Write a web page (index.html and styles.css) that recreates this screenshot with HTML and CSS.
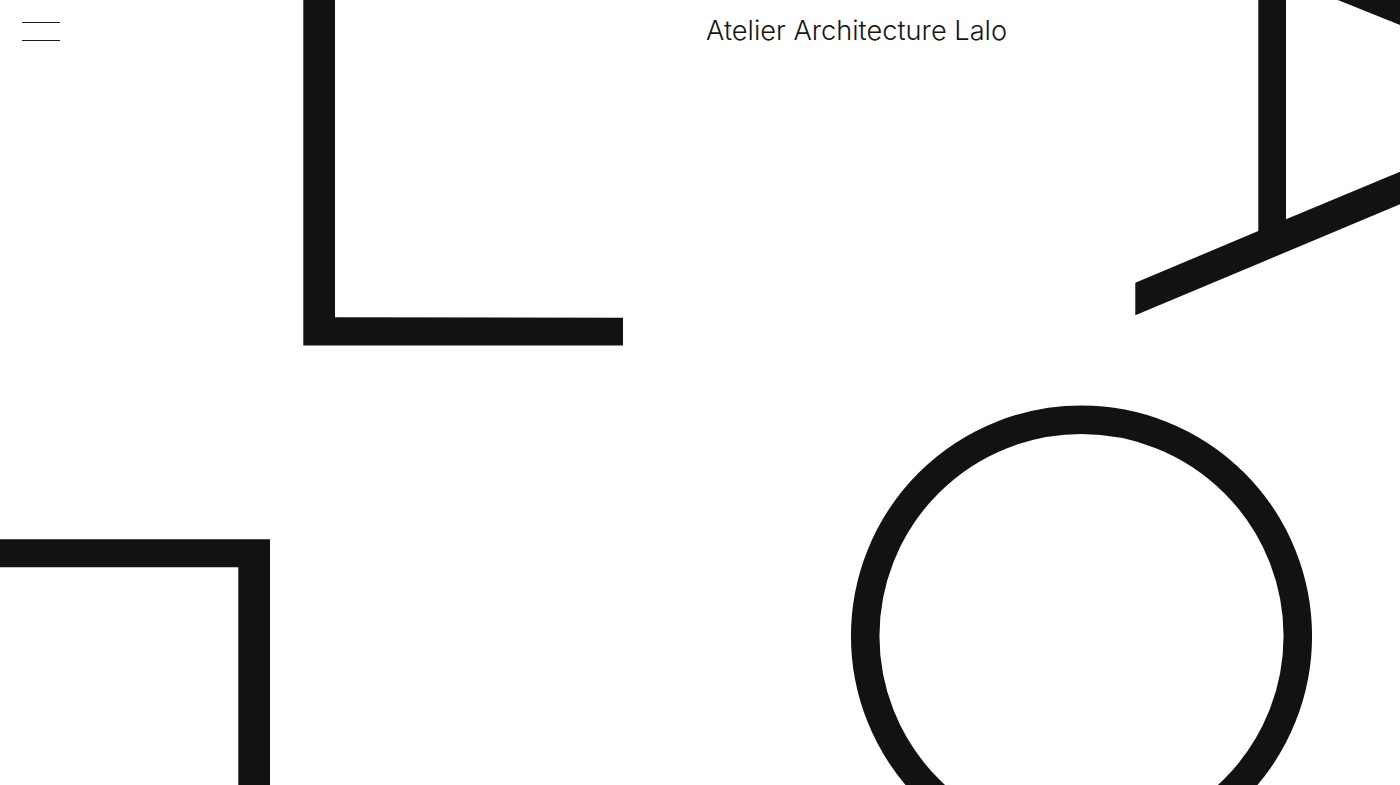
FILE: index.html
```html
<!DOCTYPE html>
<html lang="fr">
<head>
<meta charset="utf-8">
<title>Atelier Architecture Lalo</title>
<link rel="stylesheet" href="styles.css">
</head>
<body>
<div class="page">
  <svg class="letters" width="1400" height="785" viewBox="0 0 1400 785" aria-hidden="true">
    <g fill="#121212">
      <!-- L -->
      <path d="M303.3 -10 H335 V317.2 L623 317.8 V345.5 H303.3 Z"/>
      <!-- A (rotated) -->
      <path d="M1258.3 -10 H1286 V219.3 L1420 163.3 V195.9 L1135.3 315.3 V282.7 L1258.3 231.1 Z"/>
      <path d="M1313 -10 L1420 33.1 V-10 Z"/>
      <!-- L (rotated) -->
      <path d="M-10 539.3 H270 V799 H238.3 V567.3 H-10 Z"/>
    </g>
    <!-- O -->
    <circle cx="1081.5" cy="636" r="216.3" fill="none" stroke="#121212" stroke-width="28.5"/>
  </svg>
  <header class="header">
    <div class="header-left">
      <button class="menu" aria-label="Menu">
        <span class="menu-line"></span>
        <span class="menu-line"></span>
      </button>
    </div>
    <div class="header-right">
      <h1 class="title">Atelier Architecture Lalo</h1>
    </div>
  </header>
</div>
</body>
</html>
```

FILE: styles.css
```css
html, body {
  margin: 0;
  padding: 0;
  background: #ffffff;
}

body {
  font-family: Inter, "Noto Sans", sans-serif;
  color: #161616;
  overflow: hidden;
}

.page {
  position: relative;
  width: 1400px;
  height: 785px;
  overflow: hidden;
  background: #ffffff;
}

.letters {
  position: absolute;
  left: 0;
  top: 0;
  display: block;
}

.header {
  position: relative;
  display: grid;
  grid-template-columns: 1fr 1fr;
  align-items: start;
}

.header-left {
  padding: 22px 0 0 22px;
}

.menu {
  display: flex;
  flex-direction: column;
  gap: 16.6px;
  width: 38px;
  padding: 0;
  margin: 0;
  border: 0;
  background: transparent;
  cursor: pointer;
}

.menu-line {
  display: block;
  width: 38px;
  height: 1.3px;
  background: #1a1a1a;
}

.header-right {
  padding: 14px 0 0 6px;
}

.title {
  margin: 0;
  font-size: 27.2px;
  font-weight: 300;
  line-height: 34px;
  letter-spacing: 0;
  color: #161616;
  white-space: nowrap;
}
```
